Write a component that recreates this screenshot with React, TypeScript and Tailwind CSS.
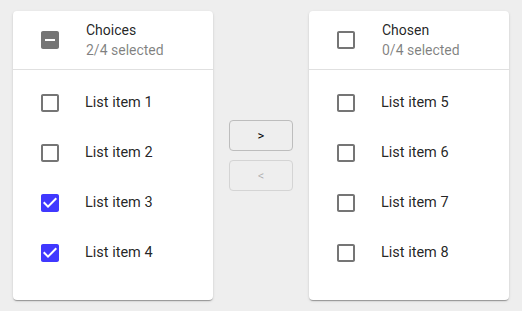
import React from 'react';

const BOX_BLANK = 'M19 5v14H5V5h14m0-2H5c-1.1 0-2 .9-2 2v14c0 1.1.9 2 2 2h14c1.1 0 2-.9 2-2V5c0-1.1-.9-2-2-2z';
const BOX_CHECKED = 'M19 3H5c-1.11 0-2 .9-2 2v14c0 1.1.89 2 2 2h14c1.11 0 2-.9 2-2V5c0-1.1-.89-2-2-2zm-9 14l-5-5 1.41-1.41L10 14.17l7.59-7.59L19 8l-9 9z';
const BOX_INDET = 'M19 3H5c-1.1 0-2 .9-2 2v14c0 1.1.9 2 2 2h14c1.1 0 2-.9 2-2V5c0-1.1-.9-2-2-2zm-2 10H7v-2h10v2z';

type State = 'blank' | 'checked' | 'indeterminate';

function Check({ state }: { state: State }) {
  const d = state === 'checked' ? BOX_CHECKED : state === 'indeterminate' ? BOX_INDET : BOX_BLANK;
  const color = state === 'checked' ? 'text-[#4038ff]' : 'text-[#757575]';
  return (
    <span className="w-[42px] h-[42px] flex items-center justify-center shrink-0">
      <svg viewBox="0 0 24 24" className={`w-6 h-6 ${color}`} fill="currentColor">
        <path d={d} />
      </svg>
    </span>
  );
}

interface ListProps {
  title: string;
  subheader: string;
  headState: State;
  items: { label: string; checked: boolean }[];
}

function TransferCard({ title, subheader, headState, items }: ListProps) {
  return (
    <div className="w-[200px] bg-white rounded shadow-[0_2px_1px_-1px_rgba(0,0,0,0.2),0_1px_1px_0_rgba(0,0,0,0.14),0_1px_3px_0_rgba(0,0,0,0.12)] overflow-hidden">
      {/* header */}
      <div className="flex items-center px-4 py-2 h-[58px]">
        <div className="mr-[15px]">
          <Check state={headState} />
        </div>
        <div className="flex flex-col text-sm leading-[20px]">
          <span className="text-[rgba(0,0,0,0.87)]">{title}</span>
          <span className="text-[rgba(0,0,0,0.5)]">{subheader}</span>
        </div>
      </div>
      <div className="h-px bg-[#e0e0e0]" />
      {/* list */}
      <div className="h-[230px] py-2">
        {items.map(it => (
          <div key={it.label} className="flex items-center h-[50px] px-4">
            <div className="w-14">
              <Check state={it.checked ? 'checked' : 'blank'} />
            </div>
            <span className="text-[14.5px] text-[rgba(0,0,0,0.87)]">{it.label}</span>
          </div>
        ))}
      </div>
    </div>
  );
}

export default function App() {
  return (
    <div className="min-h-[311px] bg-[#eeeeee] flex justify-center items-start pt-[11px] gap-4 font-['Roboto',sans-serif]">
      <TransferCard
        title="Choices"
        subheader="2/4 selected"
        headState="indeterminate"
        items={[
          { label: 'List item 1', checked: false },
          { label: 'List item 2', checked: false },
          { label: 'List item 3', checked: true },
          { label: 'List item 4', checked: true },
        ]}
      />
      <div className="h-[289px] flex flex-col justify-center items-center gap-[9px]">
        <button className="w-16 h-[31px] border border-[#bdbdbd] rounded text-[13px] text-black">&gt;</button>
        <button disabled className="w-16 h-[31px] border border-[#d4d4d4] rounded text-[13px] text-[rgba(0,0,0,0.26)]">&lt;</button>
      </div>
      <TransferCard
        title="Chosen"
        subheader="0/4 selected"
        headState="blank"
        items={[
          { label: 'List item 5', checked: false },
          { label: 'List item 6', checked: false },
          { label: 'List item 7', checked: false },
          { label: 'List item 8', checked: false },
        ]}
      />
    </div>
  );
}
